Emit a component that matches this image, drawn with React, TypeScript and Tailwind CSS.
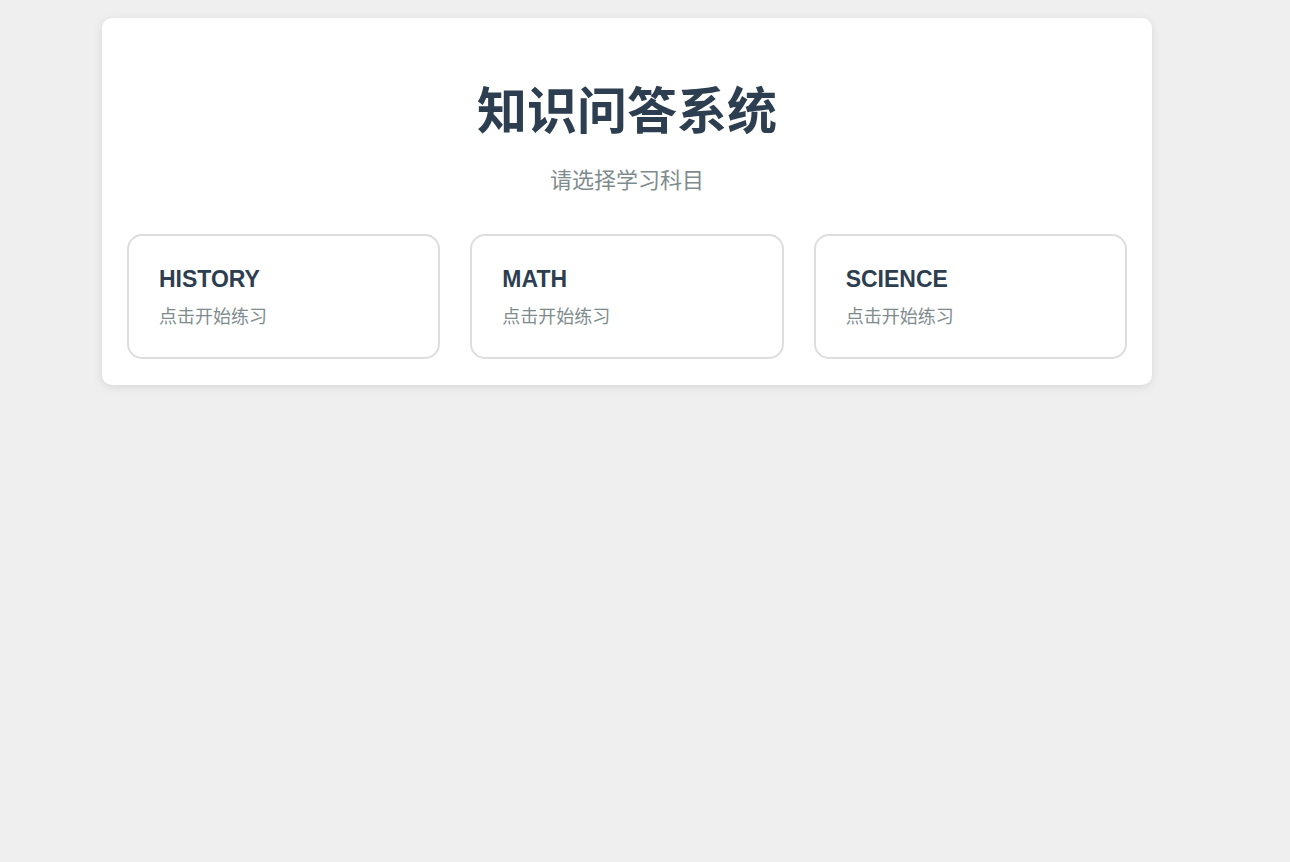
const subjects = ['HISTORY', 'MATH', 'SCIENCE']

const SubjectCard = ({ name }: { name: string }) => (
  <div className="cursor-pointer rounded-[15px] border-2 border-[#dddddd] bg-white px-[30px] pt-[29px] pb-[28px] hover:border-[#3498db]">
    <h3 className="text-[23px] leading-[28px] font-bold text-[#2c3e50]">{name}</h3>
    <p className="mt-[12px] text-[18px] leading-[24px] text-[#7f8c8d]">点击开始练习</p>
  </div>
)

export default function App() {
  return (
    <div
      className="min-h-[862px] bg-[#efefef] pt-[18px] pl-[102px]"
      style={{ fontFamily: '"Liberation Sans", Arial, "Noto Sans CJK SC", sans-serif' }}
    >
      <div className="w-[1050px] rounded-[10px] bg-white px-[25px] pt-[64px] pb-[26px] shadow-[0_2px_10px_rgba(0,0,0,0.1)]">
        <h1 className="text-center text-[50px] leading-[60px] font-bold text-[#2c3e50]">知识问答系统</h1>
        <p className="mt-[24px] text-center text-[22px] leading-[30px] text-[#7f8c8d]">请选择学习科目</p>
        <div className="mt-[38px] grid grid-cols-3 gap-[30px]">
          {subjects.map((s) => (
            <SubjectCard key={s} name={s} />
          ))}
        </div>
      </div>
    </div>
  )
}
